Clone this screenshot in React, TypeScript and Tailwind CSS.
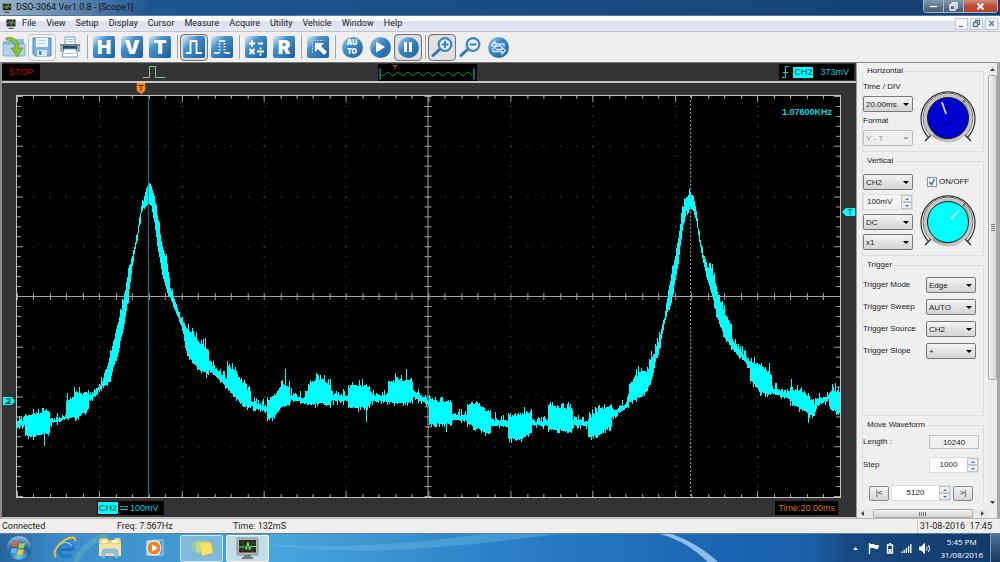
import React from "react";

const menuItems = ["File", "View", "Setup", "Display", "Cursor", "Measure", "Acquire", "Utility", "Vehicle", "Window", "Help"];

/* Envelope of the sampled signal: x, upper edge, lower edge. */
const envelope: [number, number, number][] = [
  [17, 420, 427], [24, 420, 428], [25, 415, 437], [33, 414, 439], [40, 412, 436], [49, 412, 435], [50, 418, 425], [58, 418, 424],
  [65, 414, 421], [66, 402, 419], [75, 394, 420], [88, 390, 412], [89, 395, 403], [98, 385, 392], [103, 378, 386], [104, 373, 387],
  [109, 357, 383], [114, 337, 365], [119, 316, 347], [124, 295, 326], [128, 268, 298], [132, 254, 266], [137, 230, 240], [141, 206, 215],
  [143, 199, 208], [146, 185, 207], [148, 182, 204], [151, 182, 207], [154, 194, 224], [158, 220, 253], [162, 245, 275], [167, 262, 295],
  [170, 286, 299], [175, 301, 312], [182, 319, 330], [186, 325, 353], [192, 332, 363], [198, 340, 370], [208, 348, 376], [209, 360, 372],
  [218, 369, 380], [226, 378, 388], [227, 363, 390], [236, 371, 400], [243, 384, 408], [250, 390, 410], [251, 400, 408], [266, 406, 414],
  [267, 401, 423], [275, 392, 417], [281, 384, 409], [289, 385, 407], [290, 392, 401], [303, 397, 405], [308, 387, 407], [312, 380, 407],
  [320, 377, 405], [330, 383, 407], [331, 393, 403], [347, 394, 403], [348, 385, 410], [358, 384, 410], [369, 385, 409], [370, 394, 403],
  [387, 393, 403], [388, 379, 404], [400, 379, 405], [412, 379, 404], [413, 389, 399], [428, 399, 407], [429, 398, 426], [440, 401, 426],
  [452, 400, 426], [453, 413, 422], [467, 415, 423], [468, 403, 426], [478, 402, 430], [486, 409, 435], [491, 411, 435], [492, 419, 428],
  [508, 419, 428], [509, 416, 441], [522, 413, 441], [532, 411, 435], [533, 420, 427], [548, 420, 428], [549, 405, 431], [560, 408, 432],
  [572, 409, 435], [574, 419, 427], [588, 421, 427], [589, 417, 439], [600, 409, 437], [612, 404, 428], [613, 410, 419], [628, 402, 409],
  [630, 383, 404], [640, 371, 400], [648, 369, 391], [653, 356, 379], [656, 348, 363], [660, 337, 351], [665, 316, 325], [668, 295, 310],
  [670, 283, 312], [674, 264, 292], [679, 236, 264], [683, 207, 232], [687, 196, 213], [691, 190, 209], [694, 195, 211], [697, 210, 223],
  [700, 233, 243], [704, 253, 265], [708, 265, 281], [713, 268, 298], [718, 291, 319], [724, 308, 336], [732, 324, 348], [733, 338, 350],
  [740, 348, 357], [750, 359, 369], [751, 359, 380], [760, 363, 393], [772, 374, 396], [773, 386, 394], [790, 391, 401], [791, 387, 406],
  [803, 390, 412], [815, 403, 419], [817, 399, 408], [829, 395, 402], [831, 389, 412], [840, 390, 414],
];
const spikes: Record<number, [number, number]> = {
  44: [412, 447], 74: [387, 419], 67: [393, 420], 110: [350, 382], 128: [268, 303], 196: [332, 366], 205: [338, 372], 227: [361, 388],
  285: [369, 407], 316: [373, 404], 362: [379, 408], 366: [384, 423], 406: [369, 403], 447: [402, 433], 496: [413, 427],
  553: [403, 430], 639: [366, 398], 652: [351, 380], 713: [264, 296], 770: [363, 394], 792: [379, 402], 809: [393, 424], 836: [383, 412],
};

function tracePath() {
  let seed = 7;
  const rnd = () => {
    seed = (seed * 1103515245 + 12345) % 2147483648;
    return seed / 2147483648;
  };
  const top: string[] = [];
  const bottom: string[] = [];
  let k = 0;
  for (let x = 17; x <= 840; x++) {
    while (k < envelope.length - 2 && envelope[k + 1][0] <= x) k++;
    const a = envelope[k];
    const b = envelope[k + 1];
    const f = (x - a[0]) / (b[0] - a[0]);
    let t = a[1] + (b[1] - a[1]) * f + rnd() * 3 - (rnd() > 0.72 ? 2 + rnd() * 4 : 0);
    let l = a[2] + (b[2] - a[2]) * f - rnd() * 2 + (rnd() > 0.8 ? 3 : 0);
    if (spikes[x]) [t, l] = spikes[x];
    t = Math.round(t);
    l = Math.round(l);
    top.push(`${x},${t} ${x + 1},${t}`);
    bottom.unshift(`${x + 1},${l} ${x},${l}`);
  }
  return `${top.join(" ")} ${bottom.join(" ")}`;
}
const trace = tracePath();

const cols = Array.from({ length: 51 }, (_, i) => i);
const rows = Array.from({ length: 41 }, (_, i) => i);
const gx = (i: number) => Math.round(17 + i * 16.47) + 0.5;
const gy = (i: number) => Math.round(95 + i * 10.06) + 0.5;

function Plot() {
  return (
    <svg className="block h-full w-full" viewBox="17 95 824 403" preserveAspectRatio="none" role="img" aria-label="Channel 2 trace">
      <rect x="17" y="95" width="824" height="403" fill="#000" />
      <g fill="#666">
        {cols.filter((i) => i % 5 === 0).map((i) => rows.map((j) => <rect key={`${i}-${j}`} x={gx(i) - 0.5} y={gy(j) - 0.5} width="1" height="1" />))}
        {rows.filter((j) => j % 5 === 0).map((j) => cols.map((i) => <rect key={`${i}-${j}`} x={gx(i) - 0.5} y={gy(j) - 0.5} width="1" height="1" />))}
      </g>
      <g stroke="#a4a4a4" strokeWidth="1">
        <path d="M17 296.5H841M428.5 95V498" />
        {cols.map((i) => {
          const l = i % 5 === 0 ? 6 : 3;
          return <path key={i} d={`M${gx(i)} 95v${l}M${gx(i)} 498v-${l}M${gx(i)} 293v7`} />;
        })}
        {rows.map((j) => {
          const l = j % 5 === 0 ? 6 : 4;
          return <path key={j} d={`M17 ${gy(j)}h${l}M841 ${gy(j)}h-${l}M425 ${gy(j)}h7`} />;
        })}
      </g>
      <polygon points={trace} fill="#00ffff" shapeRendering="crispEdges" />
      <path d="M148.5 95V498" stroke="#0b88aa" strokeWidth="1" />
      <path d="M691.5 95V498" stroke="#b4b4b4" strokeWidth="1" strokeDasharray="2 2" />
    </svg>
  );
}

function ScopeIcon({ className }: { className: string }) {
  return (
    <svg className={className} viewBox="0 0 12 12" aria-hidden="true">
      <rect width="12" height="9.5" rx="0.5" fill="#9aa09a" />
      <rect x="1" y="1" width="10" height="7.5" fill="#263026" />
      <path d="M1 5h2.500l1-2 1.500 4 1.500-5 1 3H11" fill="none" stroke="#69c25d" strokeWidth="0.9" />
      <path d="M3 10.500h6V12H3z" fill="#55605b" />
    </svg>
  );
}

function ToolButton({ label, pressed, soft, children }: { label: string; pressed?: boolean; soft?: boolean; children: React.ReactNode }) {
  const frame = pressed
    ? "border-[#777] bg-[#e2e2e2] shadow-[inset_0_0_1px_#888]"
    : soft
      ? "border-[#c4c4c4] bg-[#f3f3f3]"
      : "border-transparent";
  return (
    <button type="button" aria-label={label} className={`flex h-[27px] w-7 shrink-0 items-center justify-center rounded-sm border ${frame}`}>
      {children}
    </button>
  );
}

function Tile({ children }: { children?: React.ReactNode }) {
  return (
    <span className="flex size-[22px] items-center justify-center rounded-xs bg-linear-135 from-[#e4f0f8] via-[#4690c8] via-35% to-[#175f9c] font-['Inter',sans-serif] text-[19px] leading-none font-black text-white">
      {children}
    </span>
  );
}

function Ball({ children }: { children?: React.ReactNode }) {
  return (
    <span className="flex size-[21px] items-center justify-center rounded-full bg-linear-135 from-[#b5d5ec] via-[#3d8ac4] via-40% to-[#175f9c] font-['Inter',sans-serif] text-[7px] leading-[9px] font-black text-white">
      {children}
    </span>
  );
}

function Lens({ plus }: { plus?: boolean }) {
  return (
    <svg className="size-[22px]" viewBox="0 0 22 22" fill="none" aria-hidden="true">
      <path d="M2 19.500 8.500 13.500" stroke="#2f78b4" strokeWidth="3" strokeLinecap="round" />
      <circle cx="14" cy="8.500" r="6.300" fill="#e9f2f9" stroke="#3d86c0" strokeWidth="2.200" />
      <path d={plus ? "M10.500 8.500h7M14 5v7" : "M10.500 8.500h7"} stroke="#3d7fb8" strokeWidth="2" />
    </svg>
  );
}

function Divider() {
  return <span className="mr-[2px] ml-[3px] h-6 w-px shrink-0 bg-[#a8a8a8]" />;
}

function Toolbar() {
  return (
    <div role="toolbar" className="flex h-[30px] shrink-0 items-center bg-[#efefef]">
      <ToolButton label="Open">
        <svg className="h-[22px] w-6" viewBox="0 0 24 22" aria-hidden="true">
          <path d="M1 5h7l2-2h12v16H1z" fill="#8fbbe0" />
          <path d="M1 8h22v11a1 1 0 0 1-1 1H2a1 1 0 0 1-1-1z" fill="#b4d4ee" stroke="#6a9ccb" strokeWidth=".7" />
          <path d="M4 2c7-2 13 2 13 10h4l-6 9-6-9h4c0-5-3-8-9-8z" fill="#8cbf3a" stroke="#5c8f1e" strokeWidth=".7" />
        </svg>
      </ToolButton>
      <ToolButton label="Save" soft>
        <svg className="size-5" viewBox="0 0 20 20" aria-hidden="true">
          <path d="M1 1h18v18H3l-2-2z" fill="#7fb0de" stroke="#4d85bf" />
          <path d="M4 1h12v9H4z" fill="#eef5fb" />
          <path d="M6 3.500h8M6 6.500h8" stroke="#b8cfe4" />
          <path d="M5 13h10v6H5z" fill="#dce8f4" />
          <path d="M7 14h2.500v4H7z" fill="#4f83b9" />
        </svg>
      </ToolButton>
      <ToolButton label="Print">
        <svg className="size-[22px]" viewBox="0 0 22 22" aria-hidden="true">
          <path d="M6 1h10v8H6z" fill="#f4f9fd" stroke="#6ba1cf" />
          <path d="M7.500 3.500h7M7.500 5.500h7" stroke="#9cc2e2" />
          <path d="M1 8h20v8H1z" fill="#9cadbd" />
          <path d="M1 8h20v2H1z" fill="#6f8499" />
          <path d="M4 10h14v4H4z" fill="#33485f" />
          <path d="M5 13h12l2 8H3z" fill="#fff" stroke="#6ba1cf" />
          <path d="M6 17.500h10" stroke="#9cc2e2" />
        </svg>
      </ToolButton>
      <Divider />
      <ToolButton label="Horizontal"><Tile>H</Tile></ToolButton>
      <ToolButton label="Vertical"><Tile>V</Tile></ToolButton>
      <ToolButton label="Trigger"><Tile>T</Tile></ToolButton>
      <Divider />
      <ToolButton label="Wave" pressed>
        <Tile>
          <svg className="size-[18px]" viewBox="0 0 18 18" fill="none" stroke="#fff" strokeWidth="1.800" aria-hidden="true"><path d="M1 15h4.500V3h6v12H17" /></svg>
        </Tile>
      </ToolButton>
      <ToolButton label="Dotted wave">
        <Tile>
          <svg className="size-[18px]" viewBox="0 0 18 18" fill="none" stroke="#fff" strokeWidth="1.600" aria-hidden="true">
            <path d="M1 15h5M12 15h5" /><path d="M6 3h6" /><path d="M6.500 5v10M11.500 5v10" strokeDasharray="1.500 1.500" />
          </svg>
        </Tile>
      </ToolButton>
      <Divider />
      <ToolButton label="Math">
        <Tile>
          <svg className="size-[18px]" viewBox="0 0 18 18" fill="none" stroke="#fff" strokeWidth="2" aria-hidden="true">
            <path d="M2 5.500h6M5 2.500v6M11 5.500h5M2.500 11l5 5M7.500 11l-5 5M10 13.500h7" /><path d="M12.500 10.500h2M12.500 16.500h2" />
          </svg>
        </Tile>
      </ToolButton>
      <ToolButton label="Reference"><Tile>R</Tile></ToolButton>
      <Divider />
      <ToolButton label="Cursor">
        <Tile>
          <svg className="size-5" viewBox="0 0 20 20" aria-hidden="true">
            <path d="M3 3.500h13M4.500 2v15" stroke="#a9cce6" strokeDasharray="2 1" />
            <path d="M7 6h9l-3 3 6 6-3 3-6-6-3 3z" fill="#fff" />
          </svg>
        </Tile>
      </ToolButton>
      <Divider />
      <ToolButton label="Auto set"><Ball><span className="text-center">AU<br />TO</span></Ball></ToolButton>
      <ToolButton label="Run"><Ball><svg className="size-3" viewBox="0 0 12 12" aria-hidden="true"><path d="M2 .500l9 5.500-9 5.500z" fill="#fff" /></svg></Ball></ToolButton>
      <ToolButton label="Pause" pressed><Ball><svg className="size-3" viewBox="0 0 12 12" aria-hidden="true"><path d="M2 1h3v10H2zM7 1h3v10H7z" fill="#fff" /></svg></Ball></ToolButton>
      <Divider />
      <ToolButton label="Zoom in" pressed><Lens plus /></ToolButton>
      <ToolButton label="Zoom out"><Lens /></ToolButton>
      <ToolButton label="Restore">
        <Ball>
          <svg className="size-[17px]" viewBox="0 0 17 17" fill="none" stroke="#d6e8f5" strokeWidth="1.300" aria-hidden="true">
            <path d="M14 8V5H5V2.500L1.500 6 5 9V7h7M3 9v3.500h9V15l3.500-3.500L12 8.500v2H6" />
          </svg>
        </Ball>
      </ToolButton>
    </div>
  );
}

function Combo({ label, id, value, disabled }: { label: string; id: string; value: string; disabled?: boolean }) {
  return (
    <div className="relative h-4 w-[50px] shrink-0">
      <select
        id={id}
        aria-label={label}
        disabled={disabled}
        className="h-4 w-full appearance-none rounded-xs border border-[#777] bg-linear-to-b from-[#f4f4f4] to-[#d4d4d4] pt-px pl-[2px] text-[8px] leading-[10px] text-[#222] disabled:border-[#bbb] disabled:bg-none disabled:text-[#999] disabled:opacity-100"
      >
        <option>{value}</option>
      </select>
      <svg className={`pointer-events-none absolute top-[7px] right-1 h-[3px] w-[6px] ${disabled ? "text-[#aaa]" : "text-black"}`} viewBox="0 0 6 3" aria-hidden="true">
        <path d="M0 0h6L3 3z" fill="currentColor" />
      </svg>
    </div>
  );
}

function Spinner({ label, value, wide, plain }: { label: string; value: string; wide?: boolean; plain?: boolean }) {
  return (
    <div className={`flex h-4 shrink-0 border border-[#dcdcdc] ${wide ? "w-[60px]" : "w-[50px]"} ${plain ? "bg-[#f3f3f3]" : "bg-white"}`}>
      <input
        aria-label={label}
        defaultValue={value}
        className={`min-w-0 flex-1 bg-transparent text-[8px] leading-[10px] text-[#222] outline-none ${plain ? "pl-[3px]" : "text-center"}`}
      />
      <div className="flex w-[11px] flex-col">
        <button type="button" aria-label={`${label} up`} className="flex flex-1 items-center justify-center border border-[#c4c4c4] bg-[#eee]">
          <svg className="h-[2px] w-1" viewBox="0 0 4 2" aria-hidden="true"><path d="M0 2h4L2 0z" fill="#3c7fc0" /></svg>
        </button>
        <button type="button" aria-label={`${label} down`} className="flex flex-1 items-center justify-center border border-[#c4c4c4] bg-[#eee]">
          <svg className="h-[2px] w-1" viewBox="0 0 4 2" aria-hidden="true"><path d="M0 0h4L2 2z" fill="#3c7fc0" /></svg>
        </button>
      </div>
    </div>
  );
}

function Dial({ color, hand }: { color: string; hand: string }) {
  return (
    <svg className="size-14 shrink-0" viewBox="0 0 56 56" fill="none" aria-hidden="true">
      <path d="M8 47A27 27 0 1 1 48 47" stroke="#333" strokeWidth="1.200" />
      <path d="M10 45A24.800 24.800 0 1 1 46 45" stroke="#555" strokeWidth="1" />
      <path d="M5 51l8-8M51 51l-8-8" stroke="#222" strokeWidth="1.300" />
      <circle cx="28" cy="28" r="22.500" stroke="#c4c4c4" strokeWidth="4" />
      <path d="M43 12A22.500 22.500 0 0 1 13 44.500" stroke="#a2a2a2" strokeWidth="4" />
      <path d="M40 14l5-4" stroke="#333" />
      <circle cx="28" cy="28" r="20.500" fill={color} stroke="#1a1a1a" />
      <path d={hand} stroke="#e8e8e8" strokeWidth="1.600" />
    </svg>
  );
}

function Group({ title, className, children }: { title: string; className: string; children: React.ReactNode }) {
  return (
    <fieldset className={`min-w-0 shrink-0 rounded-xs border border-[#d3dee6] ${className}`}>
      <legend className="ml-[2px] px-[2px] leading-[10px]">{title}</legend>
      {children}
    </fieldset>
  );
}

const triggerRows: [string, string, string][] = [
  ["Trigger Mode", "Edge", "trigger-mode"],
  ["Trigger Sweep", "AUTO", "trigger-sweep"],
  ["Trigger Source", "CH2", "trigger-source"],
  ["Trigger Slope", "+", "trigger-slope"],
];

function SidePanel() {
  return (
    <aside className="flex w-36 shrink-0 border-t border-r-[3px] border-l border-t-[#8c8c8c] border-r-[#a6a6a6] border-l-[#999] bg-[#efefef] font-['Liberation_Sans',Arial,sans-serif] text-[8px] leading-[10px] text-[#222]">
      <div className="flex min-w-0 flex-1 flex-col">
        <div className="flex min-h-0 flex-1 flex-col gap-1 overflow-hidden pt-[3px] pr-1 pl-[5px]">
          <Group title="Horizontal" className="pt-[6px] pb-[5px]">
            <div className="flex items-end gap-[7px]">
              <div className="flex flex-col gap-1">
                <label htmlFor="time-div">Time / DIV</label>
                <Combo id="time-div" label="Time / DIV" value="20.00ms" />
                <label htmlFor="format">Format</label>
                <Combo id="format" label="Format" value="Y - T" disabled />
              </div>
              <Dial color="#0000cc" hand="M26 24l-4-12" />
            </div>
          </Group>
          <Group title="Vertical" className="pt-2 pb-[5px]">
            <div className="flex gap-[7px]">
              <div className="flex flex-col gap-1">
                <Combo id="channel" label="Channel" value="CH2" />
                <Spinner label="Scale" value="100mV" plain />
                <Combo id="coupling" label="Coupling" value="DC" />
                <Combo id="probe" label="Probe" value="x1" />
              </div>
              <div className="flex flex-col gap-1">
                <label className="flex h-4 items-center gap-[2px] pl-[7px]">
                  <span className="relative flex size-[10px]">
                    <input type="checkbox" defaultChecked className="peer size-[10px] appearance-none border border-[#8296a8] bg-[#eef3f7]" />
                    <svg className="pointer-events-none absolute inset-0 hidden peer-checked:block" viewBox="0 0 10 10" fill="none" aria-hidden="true">
                      <path d="M2.500 5l2 2.500 3-5.500" stroke="#3a62a0" strokeWidth="1.400" />
                    </svg>
                  </span>
                  ON/OFF
                </label>
                <Dial color="#00ffff" hand="M31 25l8-9" />
              </div>
            </div>
          </Group>
          <Group title="Trigger" className="pt-[7px] pb-14">
            <div className="flex flex-col gap-[6px] pr-[7px]">
              {triggerRows.map(([label, value, id]) => (
                <div key={id} className="flex items-center justify-between">
                  <label htmlFor={id}>{label}</label>
                  <Combo id={id} label={label} value={value} />
                </div>
              ))}
            </div>
          </Group>
          <Group title="Move Waveform" className="rounded-b-none border-b-0 pt-[5px]">
            <div className="flex flex-col gap-2 pr-1">
              <div className="flex items-center justify-between">
                <label htmlFor="length">Length :</label>
                <input id="length" readOnly defaultValue="10240" className="h-[14px] w-[50px] border border-[#c0c0c0] bg-[#f0f0f0] text-center text-[8px] leading-[10px]" />
              </div>
              <div className="flex items-center justify-between">
                <span>Step</span>
                <Spinner label="Step" value="1000" />
              </div>
              <div className="flex items-center gap-[2px] pt-1 pl-[6px]">
                <button type="button" aria-label="First" className="h-[15px] w-5 rounded-xs border border-[#888] bg-linear-to-b from-[#f4f4f4] to-[#d6d6d6]">|&lt;</button>
                <Spinner label="Position" value="5120" wide />
                <button type="button" aria-label="Last" className="h-[15px] w-5 rounded-xs border border-[#888] bg-linear-to-b from-[#f4f4f4] to-[#d6d6d6]">&gt;|</button>
              </div>
            </div>
          </Group>
        </div>
        <div className="flex h-[9px] shrink-0 items-center justify-between bg-[#e8e8e8] px-1">
          <svg className="h-[5px] w-[3px]" viewBox="0 0 3 5" aria-hidden="true"><path d="M3 0v5L0 2.500z" fill="#444" /></svg>
          <span className="flex h-[9px] w-[100px] items-center justify-center rounded-xs border border-[#aaa] bg-linear-to-b from-[#f5f5f5] to-[#d2d2d2]">
            <svg className="h-1 w-[7px]" viewBox="0 0 7 4" aria-hidden="true"><path d="M.5 0v4M2.500 0v4M4.500 0v4M6.500 0v4" stroke="#777" /></svg>
          </span>
          <svg className="h-[5px] w-[3px]" viewBox="0 0 3 5" aria-hidden="true"><path d="M0 0v5l3-2.500z" fill="#444" /></svg>
        </div>
      </div>
      <div className="flex w-[9px] shrink-0 flex-col items-center bg-[#ececec] pt-[5px] pb-[14px]">
        <svg className="h-[3px] w-[5px] shrink-0" viewBox="0 0 5 3" aria-hidden="true"><path d="M0 3h5L2.500 0z" fill="#444" /></svg>
        <span className="mt-1 flex h-[305px] w-[9px] items-center justify-center rounded-xs border border-[#aaa] bg-linear-to-r from-[#f5f5f5] to-[#d6d6d6]">
          <svg className="h-[7px] w-1" viewBox="0 0 4 7" aria-hidden="true"><path d="M0 .5h4M0 2.500h4M0 4.500h4M0 6.500h4" stroke="#777" /></svg>
        </span>
        <svg className="mt-auto h-[3px] w-[5px] shrink-0" viewBox="0 0 5 3" aria-hidden="true"><path d="M0 0h5L2.500 3z" fill="#444" /></svg>
      </div>
    </aside>
  );
}

function Scope() {
  return (
    <main className="flex min-w-0 flex-1 flex-col border-t border-l-2 border-t-[#777] border-l-[#8a8a8a] bg-[#333] font-['Liberation_Sans',Arial,sans-serif] text-[9px] leading-[14px] text-[#00d8e0]">
      <div className="flex h-[20px] shrink-0 items-center border-b-2 border-[#c6c6c6] pr-[2px]">
        <span className="h-4 w-[38px] bg-black text-center leading-4 text-[#d40000]">STOP</span>
        <span className="grow-[103] basis-0" />
        <svg className="h-[14px] w-[22px]" viewBox="0 0 22 14" fill="none" stroke="#7fc47f" aria-hidden="true"><path d="M0 12.500h6.500V1.500h6v11H22" /></svg>
        <span className="grow-[214] basis-0" />
        <svg className="h-[17px] w-[99px] bg-black" viewBox="0 0 99 17" fill="none" aria-hidden="true">
          <path d="M3 5H2v10h1M95 5h1v10h-1" stroke="#00d8e0" />
          <path d="M2 10l3 2 5-4 5 4 5-4 5 4 5-4 5 4 5-4 5 4 5-4 5 4 5-4 5 4 5-4 5 4 5-4 5 4 5-4 4 3" stroke="#00a010" />
          <path d="M15 1.500h4M17 1v4" stroke="#d06000" />
        </svg>
        <span className="grow-[303] basis-0" />
        <div className="flex h-4 items-center gap-[3px] bg-black pr-[5px] pl-[3px]">
          <svg className="h-3 w-2" viewBox="0 0 8 12" fill="none" stroke="#00d8e0" aria-hidden="true"><path d="M0 11.500h3.500V.5H7M1 6.500h5" /></svg>
          <span className="h-[11px] bg-[#00ffff] px-px leading-[11px] text-[#034]">CH2</span>
          <span className="pl-1">373mV</span>
        </div>
      </div>
      <div className="flex h-[12px] shrink-0 px-[15px]">
        <div className="relative flex-1">
          <svg className="absolute bottom-px left-[15%] h-[11px] w-[9px] -translate-x-1/2" viewBox="0 0 9 11" aria-hidden="true">
            <path d="M0 0h9v7.500L4.500 11 0 7.500z" fill="#ff8412" />
            <path d="M2 2.500h5M4.500 2.500V8" stroke="#3d2200" />
          </svg>
        </div>
      </div>
      <div className="flex min-h-0 flex-1">
        <div className="relative w-[14px] shrink-0">
          <svg className="absolute top-[76%] left-px h-2 w-3 -translate-y-1/2" viewBox="0 0 12 8" aria-hidden="true">
            <path d="M0 0h9l3 4-3 4H0z" fill="#00ffff" />
            <path d="M3 2h4v2L3.500 6.500h4.500" fill="none" stroke="#022" strokeWidth="1.200" />
          </svg>
        </div>
        <div className="relative min-w-0 flex-1 border border-[#c4c4c4]">
          <Plot />
          <span className="absolute top-[9px] right-2 font-bold">1.07600KHz</span>
        </div>
        <div className="relative w-[15px] shrink-0">
          <svg className="absolute top-[29%] right-px h-2 w-[13px] -translate-y-1/2" viewBox="0 0 13 8" aria-hidden="true">
            <path d="M13 0H4L0 4l4 4h9z" fill="#00ffff" />
            <path d="M5.500 1.500h5M8 1.500V7" stroke="#055" />
          </svg>
        </div>
      </div>
      <div className="flex h-[20px] shrink-0 items-center justify-between border-b border-[#ccc] pr-[18px] pl-[95px]">
        <div className="flex h-[14px] items-center gap-[2px] bg-black pr-[5px] pl-px">
          <span className="h-3 bg-[#00ffff] px-px leading-3 text-[#034]">CH2</span>
          <svg className="h-[5px] w-2" viewBox="0 0 8 5" stroke="#00d8e0" aria-hidden="true"><path d="M0 4.500h8" /><path d="M0 1.500h8" strokeDasharray="2 1" /></svg>
          <span>100mV</span>
        </div>
        <span className="h-[14px] bg-black px-[3px] text-[#d97400]">Time:20.00ms</span>
      </div>
    </main>
  );
}

function WindowButtons() {
  return (
    <div className="mr-[2px] flex h-[13px] self-start overflow-hidden rounded-b-sm border border-t-0 border-[#a9b9c9]">
      <button type="button" aria-label="Minimize" className="flex w-5 items-center justify-center border-r border-[#a9b9c9] bg-linear-to-b from-[#8499ae] to-[#405c78]">
        <svg className="h-[3px] w-[9px]" viewBox="0 0 9 3" aria-hidden="true"><path d="M.5.5h8v2h-8z" fill="#fff" stroke="#555" strokeWidth=".5" /></svg>
      </button>
      <button type="button" aria-label="Restore" className="flex w-5 items-center justify-center border-r border-[#a9b9c9] bg-linear-to-b from-[#8499ae] to-[#405c78]">
        <svg className="size-[9px]" viewBox="0 0 9 9" fill="none" stroke="#fff" strokeWidth="1.300" aria-hidden="true"><path d="M3 2V1h5v5H7M1 3h5v5H1z" /></svg>
      </button>
      <button type="button" aria-label="Close" className="flex w-[33px] items-center justify-center bg-linear-to-b from-[#d08a7a] via-[#c04a32] to-[#b5402a]">
        <svg className="h-[7px] w-[9px]" viewBox="0 0 9 7" stroke="#fff" strokeWidth="1.900" aria-hidden="true"><path d="M1.500.500l6 6M7.500.500l-6 6" /></svg>
      </button>
    </div>
  );
}

function Taskbar() {
  return (
    <footer className="relative flex h-[29px] shrink-0 items-center overflow-hidden border-t border-[#5c7f9e] bg-linear-to-r from-[#2f78b8] via-[#2c82c8] via-45% to-[#123c6e] text-white">
      <svg className="pointer-events-none absolute inset-0 h-full w-full" viewBox="0 0 1000 29" preserveAspectRatio="none" aria-hidden="true">
        <defs>
          <linearGradient id="sky" x1="0" x2="1" y1="0" y2="0">
            <stop offset="0" stopColor="#27659f" /><stop offset=".06" stopColor="#3c8cc8" /><stop offset=".28" stopColor="#47a5da" />
            <stop offset=".5" stopColor="#2a80c6" /><stop offset=".72" stopColor="#1c65b2" /><stop offset=".81" stopColor="#1c60a8" />
            <stop offset=".85" stopColor="#164880" /><stop offset="1" stopColor="#123a68" />
          </linearGradient>
        </defs>
        <path d="M0 0h1000v29H0z" fill="url(#sky)" />
        <path d="M75 29C82 14 95 5 108 0" stroke="#6fbcc0" strokeWidth="6" fill="none" opacity=".4" />
        <path d="M270 12C360 22 430 17 560 0H480C430 8 350 16 270 10z" fill="#6cbbe6" opacity=".4" />
        <path d="M660 0h12C690 7 706 17 718 29h-10C694 15 680 6 660 0z" fill="#a8d4f6" opacity=".8" />
      </svg>
      <div className="relative flex h-full flex-1 items-center">
        <button type="button" aria-label="Start" className="ml-[6px] flex size-[26px] items-center justify-center">
          <svg className="size-[26px]" viewBox="0 0 26 26" aria-hidden="true">
            <defs><radialGradient id="orb" cx=".5" cy=".85" r=".9"><stop offset="0" stopColor="#6bd0f5" /><stop offset=".5" stopColor="#1f5f9c" /><stop offset="1" stopColor="#b9d3e6" /></radialGradient></defs>
            <circle cx="13" cy="13" r="12.500" fill="url(#orb)" stroke="#2b5f8c" strokeWidth=".8" />
            <path d="M6.500 7.500q3-1.800 5.500-.2l-1 5q-2.500-1.500-5.500 0z" fill="#f0602a" />
            <path d="M13.200 7.800q2.500 1.300 6 0l-1.200 5q-3 1.300-5.800 0z" fill="#9cd04a" />
            <path d="M5.200 13.700q3-1.500 5.500 0l-1 4.800q-2.500-1.500-5.500 0z" fill="#5db6ec" />
            <path d="M12 14.200q3 1.200 5.800 0l-1.200 5q-3 1.200-5.600-.2z" fill="#fcc832" />
          </svg>
        </button>
        <button type="button" aria-label="Internet Explorer" className="ml-[21px] flex size-6 items-center justify-center">
          <svg className="size-6" viewBox="0 0 24 24" fill="none" aria-hidden="true">
            <path d="M19.500 13.500H8" stroke="#1f6fc0" strokeWidth="3" />
            <path d="M19.500 14a7 7 0 1 0-2 4.500" stroke="#1f78c8" strokeWidth="4" />
            <path d="M19 10.500a7.500 7.500 0 0 0-12-2" stroke="#8bd0f6" strokeWidth="1.500" />
            <path d="M3 21C-1 18 4 9 11 4.500 17 .5 23 0 22 5" stroke="#f2bf2e" strokeWidth="2" />
          </svg>
        </button>
        <button type="button" aria-label="Explorer" className="ml-[21px] flex size-6 items-center justify-center">
          <svg className="size-6" viewBox="0 0 24 24" aria-hidden="true">
            <path d="M1 4l2-2h6l2 2h5l1-2h5l1 3v15H1z" fill="#efcf74" />
            <path d="M4 4h5v3H4zM14 4h6v3h-6z" fill="#fff7d8" />
            <path d="M1 8h22v12H1z" fill="#f7e39c" />
            <path d="M4 22v-6q0-3 3-3h10q3 0 3 3v6h-3v-4q0-1-1-1H8q-1 0-1 1v4z" fill="#8fc4ea" stroke="#5f9fd0" strokeWidth=".5" />
          </svg>
        </button>
        <button type="button" aria-label="Media Player" className="ml-[21px] flex size-6 items-center justify-center">
          <svg className="h-[18px] w-5" viewBox="0 0 20 18" aria-hidden="true">
            <path d="M7 1h11v15H7z" fill="#5a9ad0" stroke="#a8cfe8" />
            <path d="M2 2h12v14H2z" fill="#9cc6e8" stroke="#d5e9f6" />
            <circle cx="9" cy="9" r="7" fill="#f08022" stroke="#fff" /><path d="M7 5.500l6 3.500-6 3.500z" fill="#fff" />
          </svg>
        </button>
        <button type="button" aria-label="Sticky Notes" className="ml-[13px] flex h-[27px] w-[43px] items-center justify-center rounded-xs border border-[#cfe6f4] bg-[#8fc0e0]/80">
          <svg className="h-[18px] w-6" viewBox="0 0 24 18" aria-hidden="true">
            <path d="M1 4l9-3 3 10-8 3z" fill="#9ccf8a" /><path d="M6 3l10-1v11l-9 1z" fill="#b8dca0" />
            <path d="M9 4l12-1 2 11-11 3z" fill="#f4e56a" stroke="#cbb93e" strokeWidth=".5" />
          </svg>
        </button>
        <button type="button" aria-label="DSO-3064" className="ml-[3px] flex h-[27px] w-[43px] items-center justify-center rounded-xs border border-white bg-[#c3dcea]">
          <svg className="size-[23px]" viewBox="0 0 23 23" aria-hidden="true">
            <rect x="1" y="1" width="21" height="17" rx="1" fill="#b9bbb8" stroke="#666" strokeWidth=".6" />
            <path d="M3 3h17v12.500H3z" fill="#1f2b22" />
            <path d="M3 6h17M3 9h17M3 12h17M7 3v12M16 3v12" stroke="#3f5142" strokeWidth=".6" />
            <path d="M3 10h6l1.500 2L12 5l1.500 8 1-3.500H20" fill="none" stroke="#6be05c" strokeWidth="1.200" />
            <path d="M8 18h7v2h2v2H6v-2h2z" fill="#777c78" />
          </svg>
        </button>
      </div>
      <div className="relative flex h-full items-center gap-[7px]">
        <svg className="h-[3px] w-[5px]" viewBox="0 0 5 3" aria-hidden="true"><path d="M0 3h5L2.500 0z" fill="#fff" /></svg>
        <svg className="ml-[3px] size-[11px]" viewBox="0 0 11 11" aria-hidden="true"><path d="M1.500 0v11" stroke="#fff" strokeWidth="1.300" /><path d="M2 1h4l1 1h4L10 6H7L6 5H2z" fill="#fff" /></svg>
        <svg className="h-[11px] w-2" viewBox="0 0 8 11" fill="none" aria-hidden="true"><path d="M1.500 2h5v8h-5z" stroke="#fff" strokeWidth="1.300" /><path d="M3 .5h2" stroke="#fff" /><path d="M2.500 6h3v3h-3z" fill="#dfe9f0" /></svg>
        <svg className="h-[9px] w-[11px]" viewBox="0 0 11 9" stroke="#fff" strokeWidth="1.300" aria-hidden="true"><path d="M1 9V7.500M3.200 9V6M5.400 9V4M7.600 9V2M9.800 9V0" /></svg>
        <svg className="h-[11px] w-3" viewBox="0 0 12 11" fill="none" stroke="#fff" aria-hidden="true"><path d="M.5 4h2l3-3.500v10l-3-3.500h-2z" fill="#fff" /><path d="M7.500 3.500q1.200 2 0 4M9.500 2q2 3.500 0 7" /></svg>
        <div className="ml-[3px] text-center font-['Open_Sans','Noto_Sans',sans-serif] text-[8px] leading-[13px]">
          <div>5:45 PM</div>
          <div>31/08/2016</div>
        </div>
        <button type="button" aria-label="Show desktop" className="h-full w-[10px] border-l border-[#7d9bb8] bg-linear-to-b from-[#4d7298] to-[#18385c]" />
      </div>
    </footer>
  );
}

export default function App() {
  return (
    <div className="flex h-screen flex-col overflow-hidden bg-[#efefef] font-['Roboto','Open_Sans',sans-serif] text-[9px] leading-[13px] text-[#222]">
      <header className="flex h-4 shrink-0 items-center gap-1 border-b border-[#567795] bg-linear-to-r from-[#9ab4cc] via-[#1d568f] via-15% to-[#143f70] pl-[2px]">
        <ScopeIcon className="size-[10px]" />
        <h1 className="flex-1 text-[#111]">DSO-3064 Ver1.0.8 - [Scope1]</h1>
        <WindowButtons />
      </header>
      <nav className="flex h-4 shrink-0 items-center border-b border-[#c3c3cc] bg-linear-to-b from-white from-25% via-[#dbe0f0] via-40% to-[#e4e9f6] pr-[2px] pl-[6px]">
        <ScopeIcon className="mr-[6px] size-[10px] shrink-0" />
        <div className="flex flex-1 gap-[10px]">
          {menuItems.map((item) => (
            <button key={item} type="button">{item}</button>
          ))}
        </div>
        <div className="flex gap-[2px]">
          {["M3 8.500h4", "M4.500 4V2.500h4v4H7M2.500 4.500h4v4h-4z", "M3 3l5 5M8 3L3 8"].map((d, i) => (
            <button key={d} type="button" aria-label={["Minimize document", "Restore document", "Close document"][i]} className="flex h-3 w-[13px] items-center justify-center border border-[#b9c9dc] bg-[#f4f8fc]">
              <svg className="size-[11px]" viewBox="0 0 11 11" fill="none" stroke="#5c7286" strokeWidth="1.300" aria-hidden="true"><path d={d} /></svg>
            </button>
          ))}
        </div>
      </nav>
      <Toolbar />
      <div className="flex min-h-0 flex-1">
        <Scope />
        <SidePanel />
      </div>
      <div role="status" className="flex h-[15px] shrink-0 items-center border-t border-[#b8b8b8] bg-[#f0eded] pr-2 pl-[2px]">
        <div className="flex flex-1">
          <span className="w-[115px]">Connected</span>
          <span className="w-[116px]">Freq: 7.567Hz</span>
          <span>Time: 132mS</span>
        </div>
        <span className="border-l border-[#c8c8c8] pl-[2px]">31-08-2016&nbsp; 17:45</span>
      </div>
      <Taskbar />
    </div>
  );
}
